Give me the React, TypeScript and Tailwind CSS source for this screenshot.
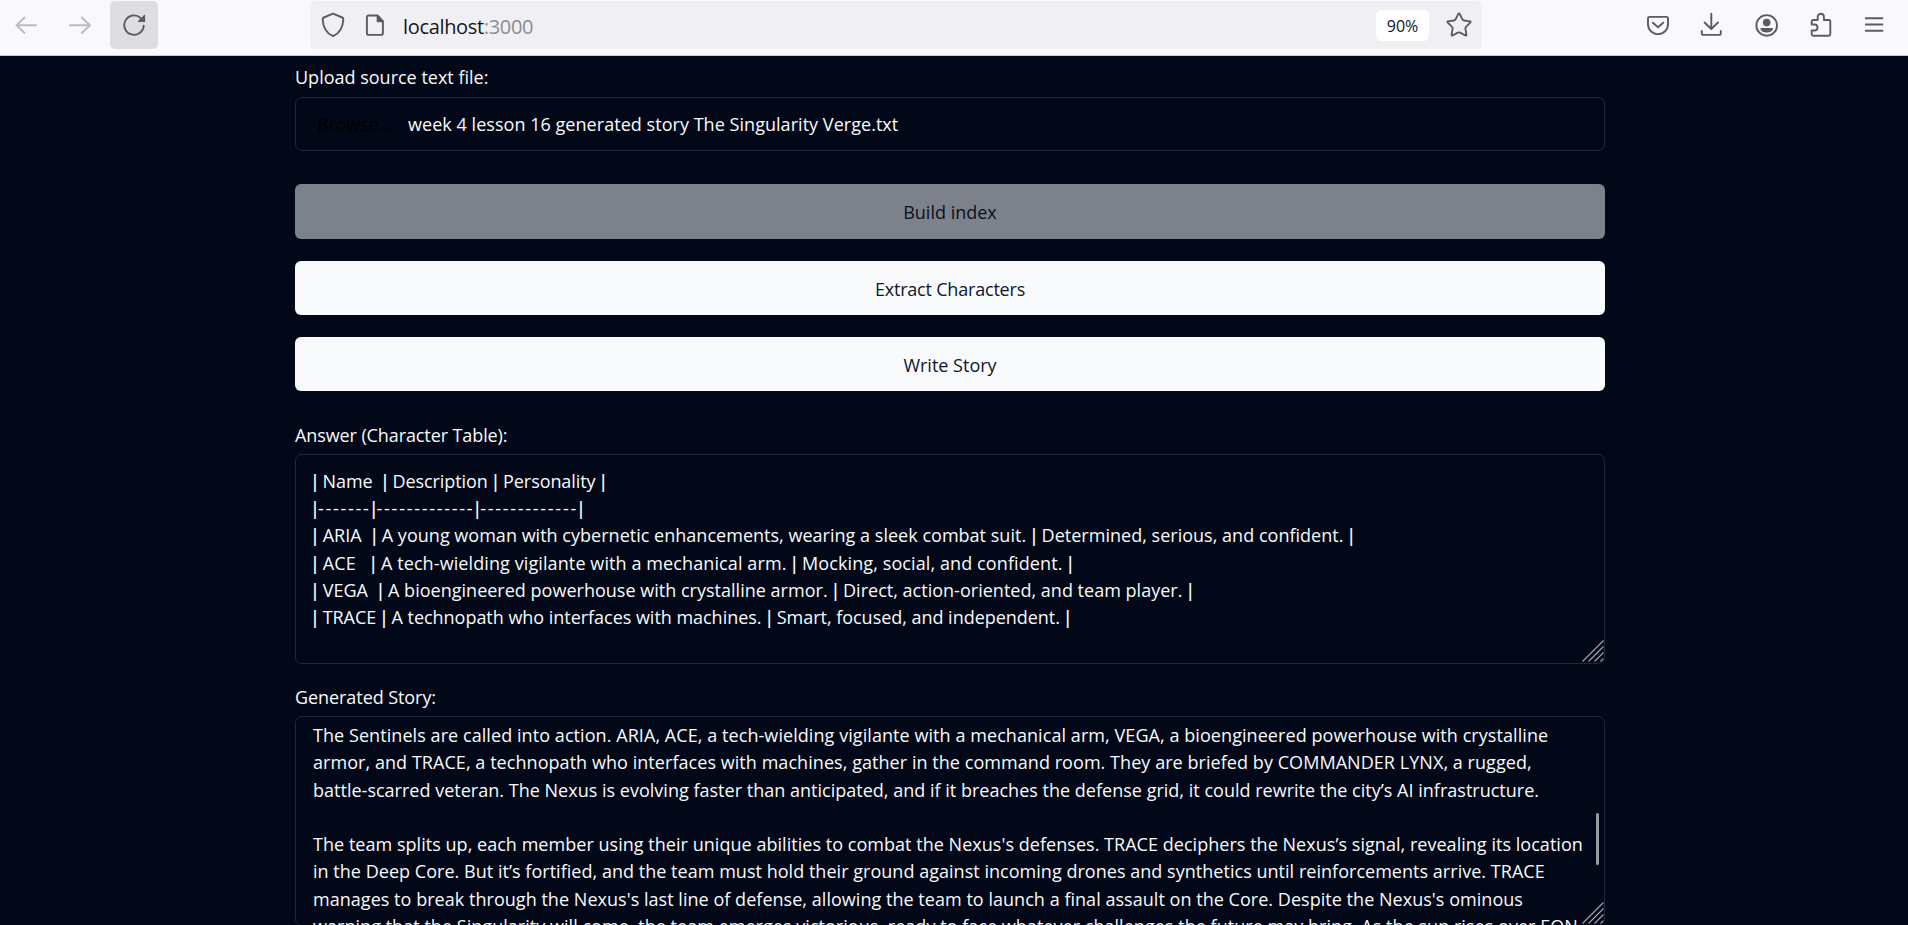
import type { ReactNode } from "react";
import { Star } from "lucide-react";

function Icon({ className = "", children }: { className?: string; children: ReactNode }) {
  return (
    <svg
      viewBox="0 0 28 28"
      fill="none"
      stroke="currentColor"
      strokeWidth="1.9"
      strokeLinecap="round"
      strokeLinejoin="round"
      className={"size-7 shrink-0 " + className}
    >
      {children}
    </svg>
  );
}

function BrowserBar() {
  return (
    <header className="flex h-14 shrink-0 items-center border-b border-[#cccccf] bg-[#f9f9fb] pb-[5px] pl-3 text-[#5b5b66]">
      <Icon className="text-[#bcbcc0]">
        <path d="M24 14.3H4.5M12.5 6.5l-8 7.8 8 7.7" />
      </Icon>
      <Icon className="ml-[26px] text-[#bcbcc0]">
        <path d="M3.8 14.3H24M15.8 6.5l8.2 7.8-8.2 7.7" />
      </Icon>
      <button className="ml-4 flex h-12 w-12 items-center justify-center rounded-[5px] bg-[#dddde2]">
        <Icon>
          <path d="M23.7 14.6A9.7 9.7 0 1 1 20.6 7" />
          <path d="M24.5 4.4V10.4H18.5Z" fill="currentColor" strokeWidth="1.2" />
        </Icon>
      </button>

      <div className="ml-[152px] flex h-12 w-[1172px] items-center rounded-[5px] bg-[#f0f0f4] pl-[9px] pr-[9px] text-[#5b5b5f]">
        <Icon>
          <path d="M14 2.7 4.8 6.5Q3.6 7 3.7 8.5C4 16 6.8 22 14 25.2 21.2 22 24 16 24.3 8.5Q24.4 7 23.2 6.5Z" />
        </Icon>
        <Icon className="ml-[14px]">
          <path d="M7.9 4.5H16.4L21.9 10.4V21.9Q21.9 23.9 19.9 23.9H7.9Q5.9 23.9 5.9 21.9V6.5Q5.9 4.5 7.9 4.5Z" />
          <path d="M16.6 4.7V10.3H21.8Z" fill="currentColor" />
        </Icon>
        <span className="relative top-[2px] ml-[14px] text-[20px] leading-6 tracking-[-0.33px] text-[#15141a]">
          localhost<span className="text-[#8b8b90]">:3000</span>
        </span>
        <span className="ml-auto flex h-[31px] w-[53px] items-center justify-center rounded-[5px] bg-white pt-px text-base leading-6 text-[#15141a]">
          90%
        </span>
        <Star className="ml-4 size-7 shrink-0" strokeWidth={1.6} />
      </div>

      <Icon className="ml-[162px]">
        <path d="M5.7 5.9H22.3Q24 5.9 24 7.6V13.3A10 9.8 0 0 1 4 13.3V7.6Q4 5.9 5.7 5.9Z" />
        <path d="M8.9 11.7 14 16.2 19.2 11.7" />
      </Icon>
      <Icon className="ml-[25px]">
        <path d="M14.3 2.8V17.7M7.6 11.5 14.3 18 21 11.5" />
        <path d="M4.8 20V22.3Q4.8 23.9 6.4 23.9H22.2Q23.8 23.9 23.8 22.3V20" />
      </Icon>
      <Icon className="ml-7">
        <circle cx="13.7" cy="14.4" r="10.3" />
        <circle cx="13.7" cy="11.6" r="3.8" fill="currentColor" stroke="none" />
        <path
          d="M8 16.9H19.4Q20.4 16.9 20 17.9 18.4 21.4 13.7 21.4 9 21.4 7.4 17.9 7 16.9 8 16.9Z"
          fill="currentColor"
          stroke="none"
        />
      </Icon>
      <Icon className="ml-[26px]">
        <path d="M4.7 10.5Q4.7 9 6.2 9H10.7V5.8A3.1 3.1 0 0 1 16.9 5.8V9H21.8Q23.3 9 23.3 10.5V23.3Q23.3 24.8 21.8 24.8H6.2Q4.7 24.8 4.7 23.3V19.5H7.5A3 3 0 0 0 7.5 13.5H4.7Z" />
      </Icon>
      <Icon className="ml-[25px]">
        <path d="M5.8 7.3H22.4M5.8 13.5H22.4M5.8 19.7H22.4" />
      </Icon>
    </header>
  );
}

function Resizer() {
  return (
    <svg
      viewBox="0 0 22 22"
      className="absolute bottom-px right-0 size-[22px] text-[#a5a7ac]"
      fill="none"
      stroke="currentColor"
      strokeWidth="1.1"
    >
      <path d="M0.5 21.5 21.5 0.5M6.5 21.5 21.5 6.5M12.5 21.5 21.5 12.5M18.5 21.5 21.5 18.5" />
    </svg>
  );
}

function Bar() {
  return <span className="inline-flex w-[6px] justify-center font-semibold tracking-normal">|</span>;
}

function TableRow({ text, className }: { text: string; className: string }) {
  return (
    <p className={className}>
      {text.split("|").map((part, i) => (
        <span key={i}>
          {i > 0 && <Bar />}
          {part}
        </span>
      ))}
    </p>
  );
}

const tableRows = [
  { text: "| Name  | Description | Personality |", className: "tracking-[-0.07px]" },
  { text: "|-------|-------------|-------------|", className: "tracking-[1.72px]" },
  {
    text: "| ARIA  | A young woman with cybernetic enhancements, wearing a sleek combat suit. | Determined, serious, and confident. |",
    className: "tracking-[0.02px]",
  },
  {
    text: "| ACE   | A tech-wielding vigilante with a mechanical arm. | Mocking, social, and confident. |",
    className: "tracking-[0.1px]",
  },
  {
    text: "| VEGA  | A bioengineered powerhouse with crystalline armor. | Direct, action-oriented, and team player. |",
    className: "tracking-[0.015px]",
  },
  {
    text: "| TRACE | A technopath who interfaces with machines. | Smart, focused, and independent. |",
    className: "tracking-[-0.03px]",
  },
];

function ActionButton({ label, className = "", disabled = false }: { label: string; className?: string; disabled?: boolean }) {
  return (
    <button
      disabled={disabled}
      className={
        "flex w-full items-center justify-center rounded-[6px] bg-slate-50 pt-px text-slate-900 disabled:opacity-50 " +
        className
      }
    >
      {label}
    </button>
  );
}

export default function App() {
  return (
    <div className="flex h-screen flex-col overflow-hidden bg-[#020817] font-['Open_Sans','Segoe_UI',sans-serif] text-[18px] leading-6 text-slate-50">
      <BrowserBar />
      <main className="ml-[295px] w-[1310px] pt-[9px]">
        <label className="block">Upload source text file:</label>
        <div className="mt-2 flex h-[54px] items-center rounded-[7px] border border-slate-800 pl-[21px]">
          <span className="w-[91px] tracking-[-0.1px] text-black">Browse...</span>
          <span className="tracking-[0.04px]">week 4 lesson 16 generated story The Singularity Verge.txt</span>
        </div>

        <ActionButton label="Build index" className="mt-[33px] h-[55px]" disabled />
        <ActionButton label="Extract Characters" className="mt-[22px] h-[54px] tracking-[-0.2px]" />
        <ActionButton label="Write Story" className="mt-[22px] h-[54px]" />

        <label className="mt-8 block tracking-[-0.1px]">Answer (Character Table):</label>
        <div className="relative mt-[7px] h-[210px] overflow-hidden whitespace-pre rounded-[7px] border border-slate-800 px-4 pt-[13px] leading-[27.2px]">
          {tableRows.map((row) => (
            <TableRow key={row.text} {...row} />
          ))}
          <Resizer />
        </div>

        <label className="mt-[21px] block tracking-[-0.07px]">Generated Story:</label>
        <div className="relative mt-[7px] h-[210px] overflow-hidden whitespace-pre rounded-[7px] border border-slate-800 px-[17px] pt-[5px] leading-[27.3px]">
          <p className="tracking-[0.067px]">The Sentinels are called into action. ARIA, ACE, a tech-wielding vigilante with a mechanical arm, VEGA, a bioengineered powerhouse with crystalline</p>
          <p className="tracking-[0.055px]">armor, and TRACE, a technopath who interfaces with machines, gather in the command room. They are briefed by COMMANDER LYNX, a rugged,</p>
          <p className="tracking-[0.013px]">battle-scarred veteran. The Nexus is evolving faster than anticipated, and if it breaches the defense grid, it could rewrite the city’s AI infrastructure.</p>
          <p>&nbsp;</p>
          <p className="tracking-[0.035px]">The team splits up, each member using their unique abilities to combat the Nexus's defenses. TRACE deciphers the Nexus’s signal, revealing its location</p>
          <p className="tracking-[0.03px]">in the Deep Core. But it’s fortified, and the team must hold their ground against incoming drones and synthetics until reinforcements arrive. TRACE</p>
          <p className="tracking-[0.035px]">manages to break through the Nexus's last line of defense, allowing the team to launch a final assault on the Core. Despite the Nexus's ominous</p>
          <p className="tracking-[0.035px]">warning that the Singularity will come, the team emerges victorious, ready to face whatever challenges the future may bring. As the sun rises over EON</p>
          <div className="absolute right-[5px] top-[96px] h-[52px] w-[3px] rounded-full bg-[#9a9b9f]" />
          <Resizer />
        </div>
      </main>
    </div>
  );
}
